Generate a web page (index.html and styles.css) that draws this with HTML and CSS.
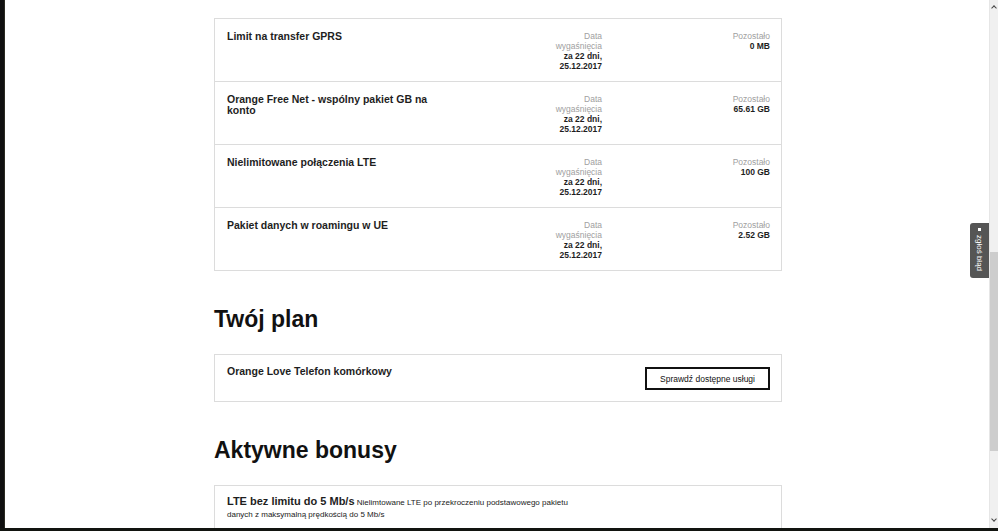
FILE: index.html
```html
<!DOCTYPE html>
<html lang="pl">
<head>
<meta charset="utf-8">
<title>Pakiety</title>
<link rel="stylesheet" href="styles.css">
</head>
<body>
<div class="screen">
  <div class="top">
    <div class="edge"></div>
    <main class="viewport">
      <div class="container">
        <section class="card list">
          <div class="row">
            <div class="title">Limit na transfer GPRS</div>
            <div class="meta date"><span class="label">Data wygaśnięcia</span><b>za 22 dni, 25.12.2017</b></div>
            <div class="meta left"><span class="label">Pozostało</span><b>0 MB</b></div>
          </div>
          <div class="row">
            <div class="title">Orange Free Net - wspólny pakiet GB na konto</div>
            <div class="meta date"><span class="label">Data wygaśnięcia</span><b>za 22 dni, 25.12.2017</b></div>
            <div class="meta left"><span class="label">Pozostało</span><b>65.61 GB</b></div>
          </div>
          <div class="row">
            <div class="title">Nielimitowane połączenia LTE</div>
            <div class="meta date"><span class="label">Data wygaśnięcia</span><b>za 22 dni, 25.12.2017</b></div>
            <div class="meta left"><span class="label">Pozostało</span><b>100 GB</b></div>
          </div>
          <div class="row">
            <div class="title">Pakiet danych w roamingu w UE</div>
            <div class="meta date"><span class="label">Data wygaśnięcia</span><b>za 22 dni, 25.12.2017</b></div>
            <div class="meta left"><span class="label">Pozostało</span><b>2.52 GB</b></div>
          </div>
        </section>

        <h2 class="heading">Twój plan</h2>
        <section class="card plan">
          <div class="title">Orange Love Telefon komórkowy</div>
          <button class="btn" type="button">Sprawdź dostępne usługi</button>
        </section>

        <h2 class="heading">Aktywne bonusy</h2>
        <section class="card bonus">
          <p class="bonus-text"><strong class="bonus-title">LTE bez limitu do 5 Mb/s</strong> Nielimtowane LTE po przekroczeniu podstawowego pakietu danych z maksymalną prędkością do 5 Mb/s</p>
        </section>
      </div>
      <a class="report" href="#"><span class="dot"></span>zgłoś błąd</a>
    </main>
    <div class="scrollbar">
      <span class="arrow up"></span>
      <div class="track"><div class="thumb"></div></div>
      <span class="arrow down"></span>
    </div>
  </div>
  <div class="bottom"></div>
</div>
</body>
</html>
```

FILE: styles.css
```css
* { box-sizing: border-box; }
html, body { margin: 0; padding: 0; }
body {
  width: 998px;
  height: 531px;
  overflow: hidden;
  background: #fff;
  font-family: "Liberation Sans", Arial, sans-serif;
  color: #1a1a1a;
}
.screen {
  display: flex;
  flex-direction: column;
  height: 531px;
}
.top {
  display: flex;
  flex: 1;
  min-height: 0;
}
.edge {
  width: 5px;
  background: #101010;
  border-right: 1px solid #2a2a22;
}
.viewport {
  flex: 1;
  position: relative;
  overflow: hidden;
  background: #fff;
}
.container {
  width: 568px;
  margin: 0 0 0 209px;
  padding-top: 18px;
}
.card {
  border: 1px solid #dcdcdc;
  background: #fff;
}
.row {
  display: grid;
  grid-template-columns: 220px 1fr 168px;
  height: 63px;
  padding: 12px 11px 0 12px;
  border-bottom: 1px solid #dcdcdc;
}
.row:last-child { border-bottom: 0; height: 62px; }
.title {
  font-size: 10.5px;
  font-weight: bold;
  line-height: 11px;
  color: #1e1e1e;
}
.meta {
  text-align: right;
  font-size: 8.5px;
  line-height: 10px;
}
.meta .label {
  display: block;
  color: #a0a0a0;
  margin-left: auto;
}
.meta.date .label { width: 52px; }
.meta b {
  display: block;
  color: #1e1e1e;
  font-weight: bold;
}
.meta.date b { width: 56px; margin-left: auto; }
.heading {
  margin: 34px 0 21px;
  font-size: 23px;
  line-height: 28px;
  font-weight: bold;
  color: #111;
}
.plan {
  display: flex;
  justify-content: space-between;
  align-items: flex-start;
  padding: 11px 11px 11px 12px;
}
.btn {
  margin-top: 1px;
  width: 125px;
  height: 23px;
  border: 2px solid #111;
  background: #fff;
  font-family: "Liberation Sans", Arial, sans-serif;
  font-size: 8.5px;
  color: #111;
  padding: 0;
  cursor: pointer;
}
.bonus {
  padding: 9px 12px 20px;
}
.bonus-text {
  margin: 0;
  width: 345px;
  font-size: 8px;
  line-height: 12px;
  color: #222;
}
.bonus-title {
  font-size: 11px;
  line-height: 12px;
  color: #1e1e1e;
}
.report {
  position: absolute;
  right: 0;
  top: 223px;
  width: 19px;
  height: 55px;
  background: #555;
  border-radius: 3px 0 0 3px;
  color: #fff;
  text-decoration: none;
  font-size: 8px;
  writing-mode: vertical-rl;
  display: flex;
  align-items: center;
  padding-top: 5px;
  gap: 4px;
}
.report .dot {
  width: 3px;
  height: 3px;
  background: #fff;
  display: inline-block;
}
.scrollbar {
  width: 9px;
  background: #f0f0f0;
  display: flex;
  flex-direction: column;
  align-items: center;
  border-left: 1px solid #e6e6e6;
}
.arrow {
  width: 4px;
  height: 4px;
  border-left: 1px solid #444;
  border-top: 1px solid #444;
  margin: 4px 0 2px;
}
.arrow.up { transform: rotate(45deg); margin-top: 6px; }
.arrow.down { transform: rotate(-135deg); margin: 2px 0 7px; }
.track {
  flex: 1;
  width: 100%;
  padding-top: 240px;
}
.thumb {
  height: 199px;
  background: #cdcdcd;
}
.bottom {
  height: 3px;
  background: #121410;
}
```
